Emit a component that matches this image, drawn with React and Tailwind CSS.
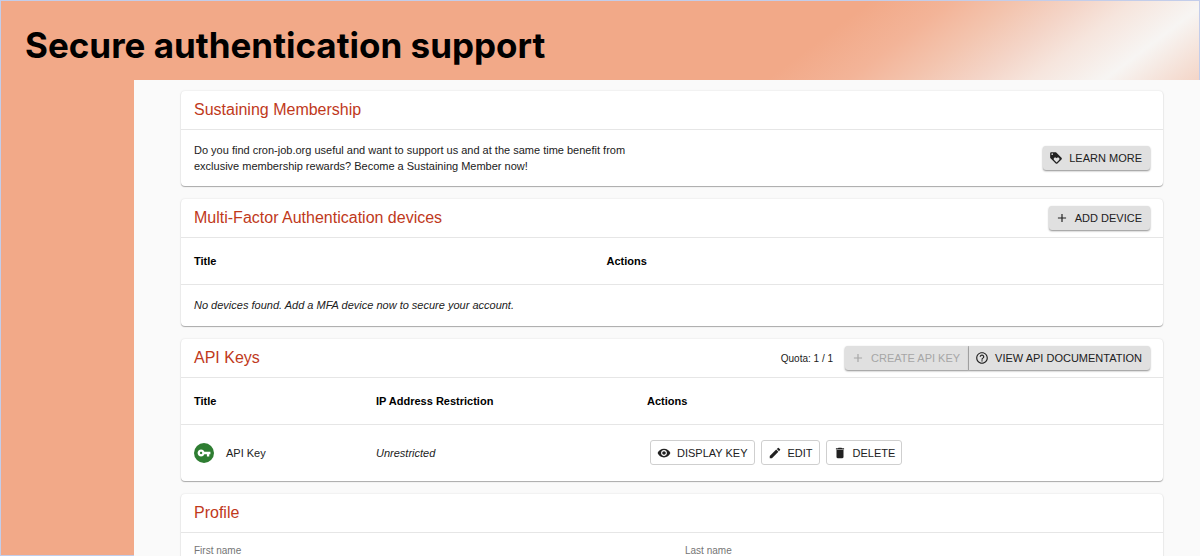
import React from "react";
import { MdAdd, MdDelete, MdEdit, MdHelpOutline, MdRemoveRedEye, MdVpnKey } from "react-icons/md";

function LoyaltyIcon({ className }) {
  return (
    <svg viewBox="0 0 24 24" fill="currentColor" className={className} aria-hidden="true">
      <path d="M21.41 11.58l-9-9C12.05 2.22 11.55 2 11 2H4c-1.1 0-2 .9-2 2v7c0 .55.22 1.05.59 1.42l9 9c.36.36.86.58 1.41.58.55 0 1.05-.22 1.41-.59l7-7c.37-.36.59-.86.59-1.41 0-.55-.23-1.06-.59-1.42zM5.5 7C4.67 7 4 6.33 4 5.5S4.67 4 5.5 4 7 4.67 7 5.5 6.33 7 5.5 7zm11.77 8.27L13 19.54l-4.27-4.27C8.28 14.81 8 14.19 8 13.5c0-1.38 1.12-2.5 2.5-2.5.69 0 1.32.28 1.77.74l.73.72.73-.73c.45-.45 1.08-.73 1.77-.73 1.38 0 2.5 1.12 2.5 2.5 0 .69-.28 1.32-.73 1.77z" />
    </svg>
  );
}

function Card({ title, actions, children }) {
  return (
    <section className="rounded bg-white shadow-[0_1px_1px_rgba(0,0,0,0.3),0_0_2px_rgba(0,0,0,0.12)]">
      <div className="flex h-[39px] items-center justify-between border-b border-[#e6e6e6] px-[13px]">
        <h2 className="text-base text-[#c0391b]">{title}</h2>
        {actions}
      </div>
      {children}
    </section>
  );
}

function ContainedButton({ icon: Icon, children, className = "rounded-[3px]", disabled }) {
  return (
    <button
      type="button"
      disabled={disabled}
      className={`flex h-6 items-center gap-1.5 bg-[#e0e0e0] pr-2 pl-1.5 text-[11px] uppercase text-[#212121] shadow-[0_1px_2px_rgba(0,0,0,0.45)] disabled:text-[#a6a6a6] ${className}`}
    >
      <Icon className="size-3.5" />
      {children}
    </button>
  );
}

function OutlinedButton({ icon: Icon, children }) {
  return (
    <button
      type="button"
      className="flex h-[25px] items-center gap-1.5 rounded-[3px] border border-[#cfcfcf] px-1.5 text-[11px] uppercase text-[#212121]"
    >
      <Icon className="size-3.5" />
      {children}
    </button>
  );
}

export default function App() {
  return (
    <div className="flex h-screen flex-col overflow-hidden border-l border-[#c3cdea] bg-[#f2a988] font-['Liberation_Sans',Arial,sans-serif] text-[11px] text-[#212121]">
      <header className="flex h-20 shrink-0 items-center border-t border-r border-[#c3cdea] bg-[linear-gradient(143deg,#f2a988_66.8%,#f3b498_73%,#f3c4ae_78%,#f4d5c8_83%,#f6e5dd_87%,#f7f5f3_92.7%,#f4d5c7_100%)] px-6 pt-2.5">
        <h1 className="font-[Inter,sans-serif] text-[35px] font-bold text-black">
          Secure authentication support
        </h1>
      </header>

      <div className="flex min-h-0 grow">
        <div className="w-[133px] shrink-0 border-b border-[#c3cdea]" />

        <main className="flex grow flex-col gap-[13px] overflow-hidden bg-[#fafafa] pt-[11px] pr-[37px] pl-[47px]">
          <Card title="Sustaining Membership">
            <div className="flex items-center justify-between px-[13px] py-3">
              <p className="max-w-[470px] leading-4">
                Do you find cron-job.org useful and want to support us and at the same time benefit
                from exclusive membership rewards? Become a Sustaining Member now!
              </p>
              <ContainedButton icon={LoyaltyIcon}>Learn more</ContainedButton>
            </div>
          </Card>

          <Card
            title="Multi-Factor Authentication devices"
            actions={<ContainedButton icon={MdAdd}>Add device</ContainedButton>}
          >
            <table className="w-full table-fixed text-left">
              <thead>
                <tr className="h-[46px] border-b border-[#e6e6e6] text-black">
                  <th className="w-[42%] px-[13px]">Title</th>
                  <th className="px-[13px]">Actions</th>
                </tr>
              </thead>
              <tbody>
                <tr className="h-[42px]">
                  <td colSpan={2} className="px-[13px] italic">
                    No devices found. Add a MFA device now to secure your account.
                  </td>
                </tr>
              </tbody>
            </table>
          </Card>

          <Card
            title="API Keys"
            actions={
              <div className="flex items-center gap-3">
                <span className="text-[10px]">Quota: 1 / 1</span>
                <div className="flex">
                  <ContainedButton
                    icon={MdAdd}
                    disabled
                    className="rounded-l-[3px] border-r border-[#b5b5b5]"
                  >
                    Create API key
                  </ContainedButton>
                  <ContainedButton icon={MdHelpOutline} className="rounded-r-[3px]">
                    View API documentation
                  </ContainedButton>
                </div>
              </div>
            }
          >
            <table className="w-full table-fixed text-left">
              <thead>
                <tr className="h-[46px] border-b border-[#e6e6e6] text-black">
                  <th className="w-[182px] px-[13px]">Title</th>
                  <th className="w-[271px] px-[13px]">IP Address Restriction</th>
                  <th className="px-[13px]">Actions</th>
                </tr>
              </thead>
              <tbody>
                <tr className="h-[57px]">
                  <td className="px-[13px]">
                    <div className="flex items-center gap-3">
                      <span className="flex size-5 items-center justify-center rounded-full bg-[#2e7d32] text-white">
                        <MdVpnKey className="size-3.5" />
                      </span>
                      API Key
                    </div>
                  </td>
                  <td className="px-[13px] italic">Unrestricted</td>
                  <td className="px-4">
                    <div className="flex gap-1.5">
                      <OutlinedButton icon={MdRemoveRedEye}>Display key</OutlinedButton>
                      <OutlinedButton icon={MdEdit}>Edit</OutlinedButton>
                      <OutlinedButton icon={MdDelete}>Delete</OutlinedButton>
                    </div>
                  </td>
                </tr>
              </tbody>
            </table>
          </Card>

          <Card title="Profile">
            <form className="grid grid-cols-2 gap-x-[26px] px-[13px] py-3 text-[10px] leading-3 text-[#757575]">
              <div>
                <label htmlFor="firstName" className="block">First name</label>
                <input id="firstName" type="text" className="h-6 w-full border-b border-[#949494]" />
              </div>
              <div>
                <label htmlFor="lastName" className="block">Last name</label>
                <input id="lastName" type="text" className="h-6 w-full border-b border-[#949494]" />
              </div>
            </form>
          </Card>
        </main>
      </div>
    </div>
  );
}
